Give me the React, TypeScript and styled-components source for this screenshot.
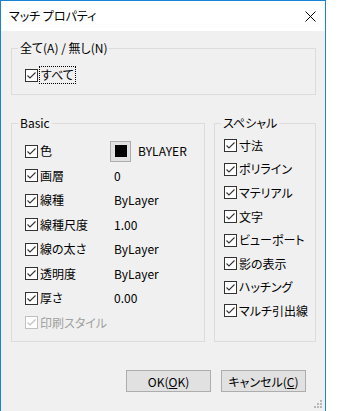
import React from 'react'
import styled, { createGlobalStyle } from 'styled-components'

const GlobalStyle = createGlobalStyle`
  html, body {
    margin: 0;
    padding: 0;
    background: #ffffff;
  }
  body {
    font-family: "Noto Sans CJK JP", "Noto Sans", sans-serif;
    font-size: 12px;
    color: #000;
    font-feature-settings: 'palt';
  }
`

const Window = styled.div`
  box-sizing: border-box;
  width: 326px;
  height: 420px;
  border: 1px solid #1883d7;
  background: #f0f0f0;
  display: flex;
  flex-direction: column;
  position: relative;
`

const TitleBar = styled.div`
  height: 30px;
  background: #ffffff;
  display: flex;
  align-items: center;
  justify-content: space-between;
  padding: 0 9px 0 8px;
  flex-shrink: 0;
`

const Title = styled.span`
  font-size: 12px;
  line-height: 16px;
`

const Body = styled.div`
  padding: 9px 9px 0 10px;
  display: flex;
  flex-direction: column;
`

const Group = styled.fieldset<{ $w?: number }>`
  margin: 0;
  border: 1px solid #dcdcdc;
  padding: 0;
  min-width: 0;
  ${(p) => (p.$w ? `width: ${p.$w}px; flex: none;` : 'flex: 1;')}
`

const Legend = styled.legend`
  margin-left: 6px;
  padding: 0 2px;
  line-height: 16px;
`

const AllBox = styled.div`
  padding: 11px 0 11px 13px;
`

const Columns = styled.div`
  display: flex;
  gap: 9px;
  margin-top: 20px;
`

const BasicGrid = styled.div`
  display: grid;
  grid-template-columns: 89px 1fr;
  grid-auto-rows: 24.5px;
  align-items: center;
  padding: 8px 0 6px 13px;
`

const SpecialList = styled.div`
  display: grid;
  grid-auto-rows: 23.6px;
  align-items: center;
  padding: 3px 0 18px 9px;
`

const CheckRow = styled.label<{ $disabled?: boolean }>`
  display: flex;
  align-items: center;
  gap: 2px;
  line-height: 16px;
  white-space: nowrap;
  color: ${(p) => (p.$disabled ? '#a0a0a0' : '#000')};
`

const BoxSvg = styled.svg`
  flex-shrink: 0;
  display: block;
`

const FocusText = styled.span`
  outline: 1px dotted #000;
  outline-offset: 0;
  padding: 0 1px;
`

const Value = styled.span`
  line-height: 16px;
  white-space: nowrap;
`

const ColorValue = styled.div`
  display: flex;
  align-items: center;
  gap: 7px;
  margin-left: -4px;
`

const Swatch = styled.div`
  box-sizing: border-box;
  width: 21px;
  height: 21px;
  border: 1px solid #adadad;
  background: #e1e1e1;
  display: flex;
  align-items: center;
  justify-content: center;
`

const SwatchInner = styled.div`
  width: 12px;
  height: 12px;
  background: #000;
`

const ButtonRow = styled.div`
  display: flex;
  justify-content: flex-end;
  gap: 10px;
  padding: 28px 10px 0 0;
`

const Button = styled.button<{ $w: number }>`
  box-sizing: border-box;
  width: ${(p) => p.$w}px;
  height: 22px;
  border: 1px solid #adadad;
  background: #e1e1e1;
  font-family: inherit;
  font-size: 12px;
  color: #000;
  padding: 0;
  font-feature-settings: 'palt';
`

const Grip = styled.svg`
  position: absolute;
  right: 3px;
  bottom: 11px;
`

const Check = ({ disabled }: { disabled?: boolean }) => {
  const c = disabled ? '#c0c0c0' : '#333333'
  return (
    <BoxSvg width="13" height="13" viewBox="0 0 13 13">
      <rect x="0.5" y="0.5" width="12" height="12" fill="#fff" stroke={c} />
      <path d="M2.5 6.5 L5 9 L10.5 3.5" fill="none" stroke={c} strokeWidth="1.1" />
    </BoxSvg>
  )
}

const CheckItem = ({ label, disabled }: { label: string; disabled?: boolean }) => (
  <CheckRow $disabled={disabled}>
    <Check disabled={disabled} />
    <span>{label}</span>
  </CheckRow>
)

const basicRows = [
  { label: '画層', value: '0' },
  { label: '線種', value: 'ByLayer' },
  { label: '線種尺度', value: '1.00' },
  { label: '線の太さ', value: 'ByLayer' },
  { label: '透明度', value: 'ByLayer' },
  { label: '厚さ', value: '0.00' },
]

const specials = ['寸法', 'ポリライン', 'マテリアル', '文字', 'ビューポート', '影の表示', 'ハッチング', 'マルチ引出線']

const App: React.FC = () => {
  return (
    <>
      <GlobalStyle />
      <Window>
        <TitleBar>
          <Title>マッチ プロパティ</Title>
          <svg width="11" height="11" viewBox="0 0 11 11">
            <path d="M0.5 0.5 L10.5 10.5 M10.5 0.5 L0.5 10.5" stroke="#000" strokeWidth="1" />
          </svg>
        </TitleBar>
        <Body>
          <Group>
            <Legend>全て(A) / 無し(N)</Legend>
            <AllBox>
              <CheckRow>
                <Check />
                <FocusText>すべて</FocusText>
              </CheckRow>
            </AllBox>
          </Group>
          <Columns>
            <Group $w={192}>
              <Legend>Basic</Legend>
              <BasicGrid>
                <CheckItem label="色" />
                <ColorValue>
                  <Swatch>
                    <SwatchInner />
                  </Swatch>
                  <Value>BYLAYER</Value>
                </ColorValue>
                {basicRows.map((r) => (
                  <React.Fragment key={r.label}>
                    <CheckItem label={r.label} />
                    <Value>{r.value}</Value>
                  </React.Fragment>
                ))}
                <CheckItem label="印刷スタイル" disabled />
              </BasicGrid>
            </Group>
            <Group>
              <Legend>スペシャル</Legend>
              <SpecialList>
                {specials.map((s) => (
                  <CheckItem key={s} label={s} />
                ))}
              </SpecialList>
            </Group>
          </Columns>
          <ButtonRow>
            <Button $w={85}>
              OK(<u>O</u>K)
            </Button>
            <Button $w={85}>
              キャンセル(<u>C</u>)
            </Button>
          </ButtonRow>
        </Body>
        <Grip width="8" height="8" viewBox="0 0 8 8">
          <rect x="6" y="0" width="2" height="2" fill="#b8b8b8" />
          <rect x="3" y="3" width="2" height="2" fill="#b8b8b8" />
          <rect x="6" y="3" width="2" height="2" fill="#b8b8b8" />
          <rect x="0" y="6" width="2" height="2" fill="#b8b8b8" />
          <rect x="3" y="6" width="2" height="2" fill="#b8b8b8" />
          <rect x="6" y="6" width="2" height="2" fill="#b8b8b8" />
        </Grip>
      </Window>
    </>
  )
}

export default App
